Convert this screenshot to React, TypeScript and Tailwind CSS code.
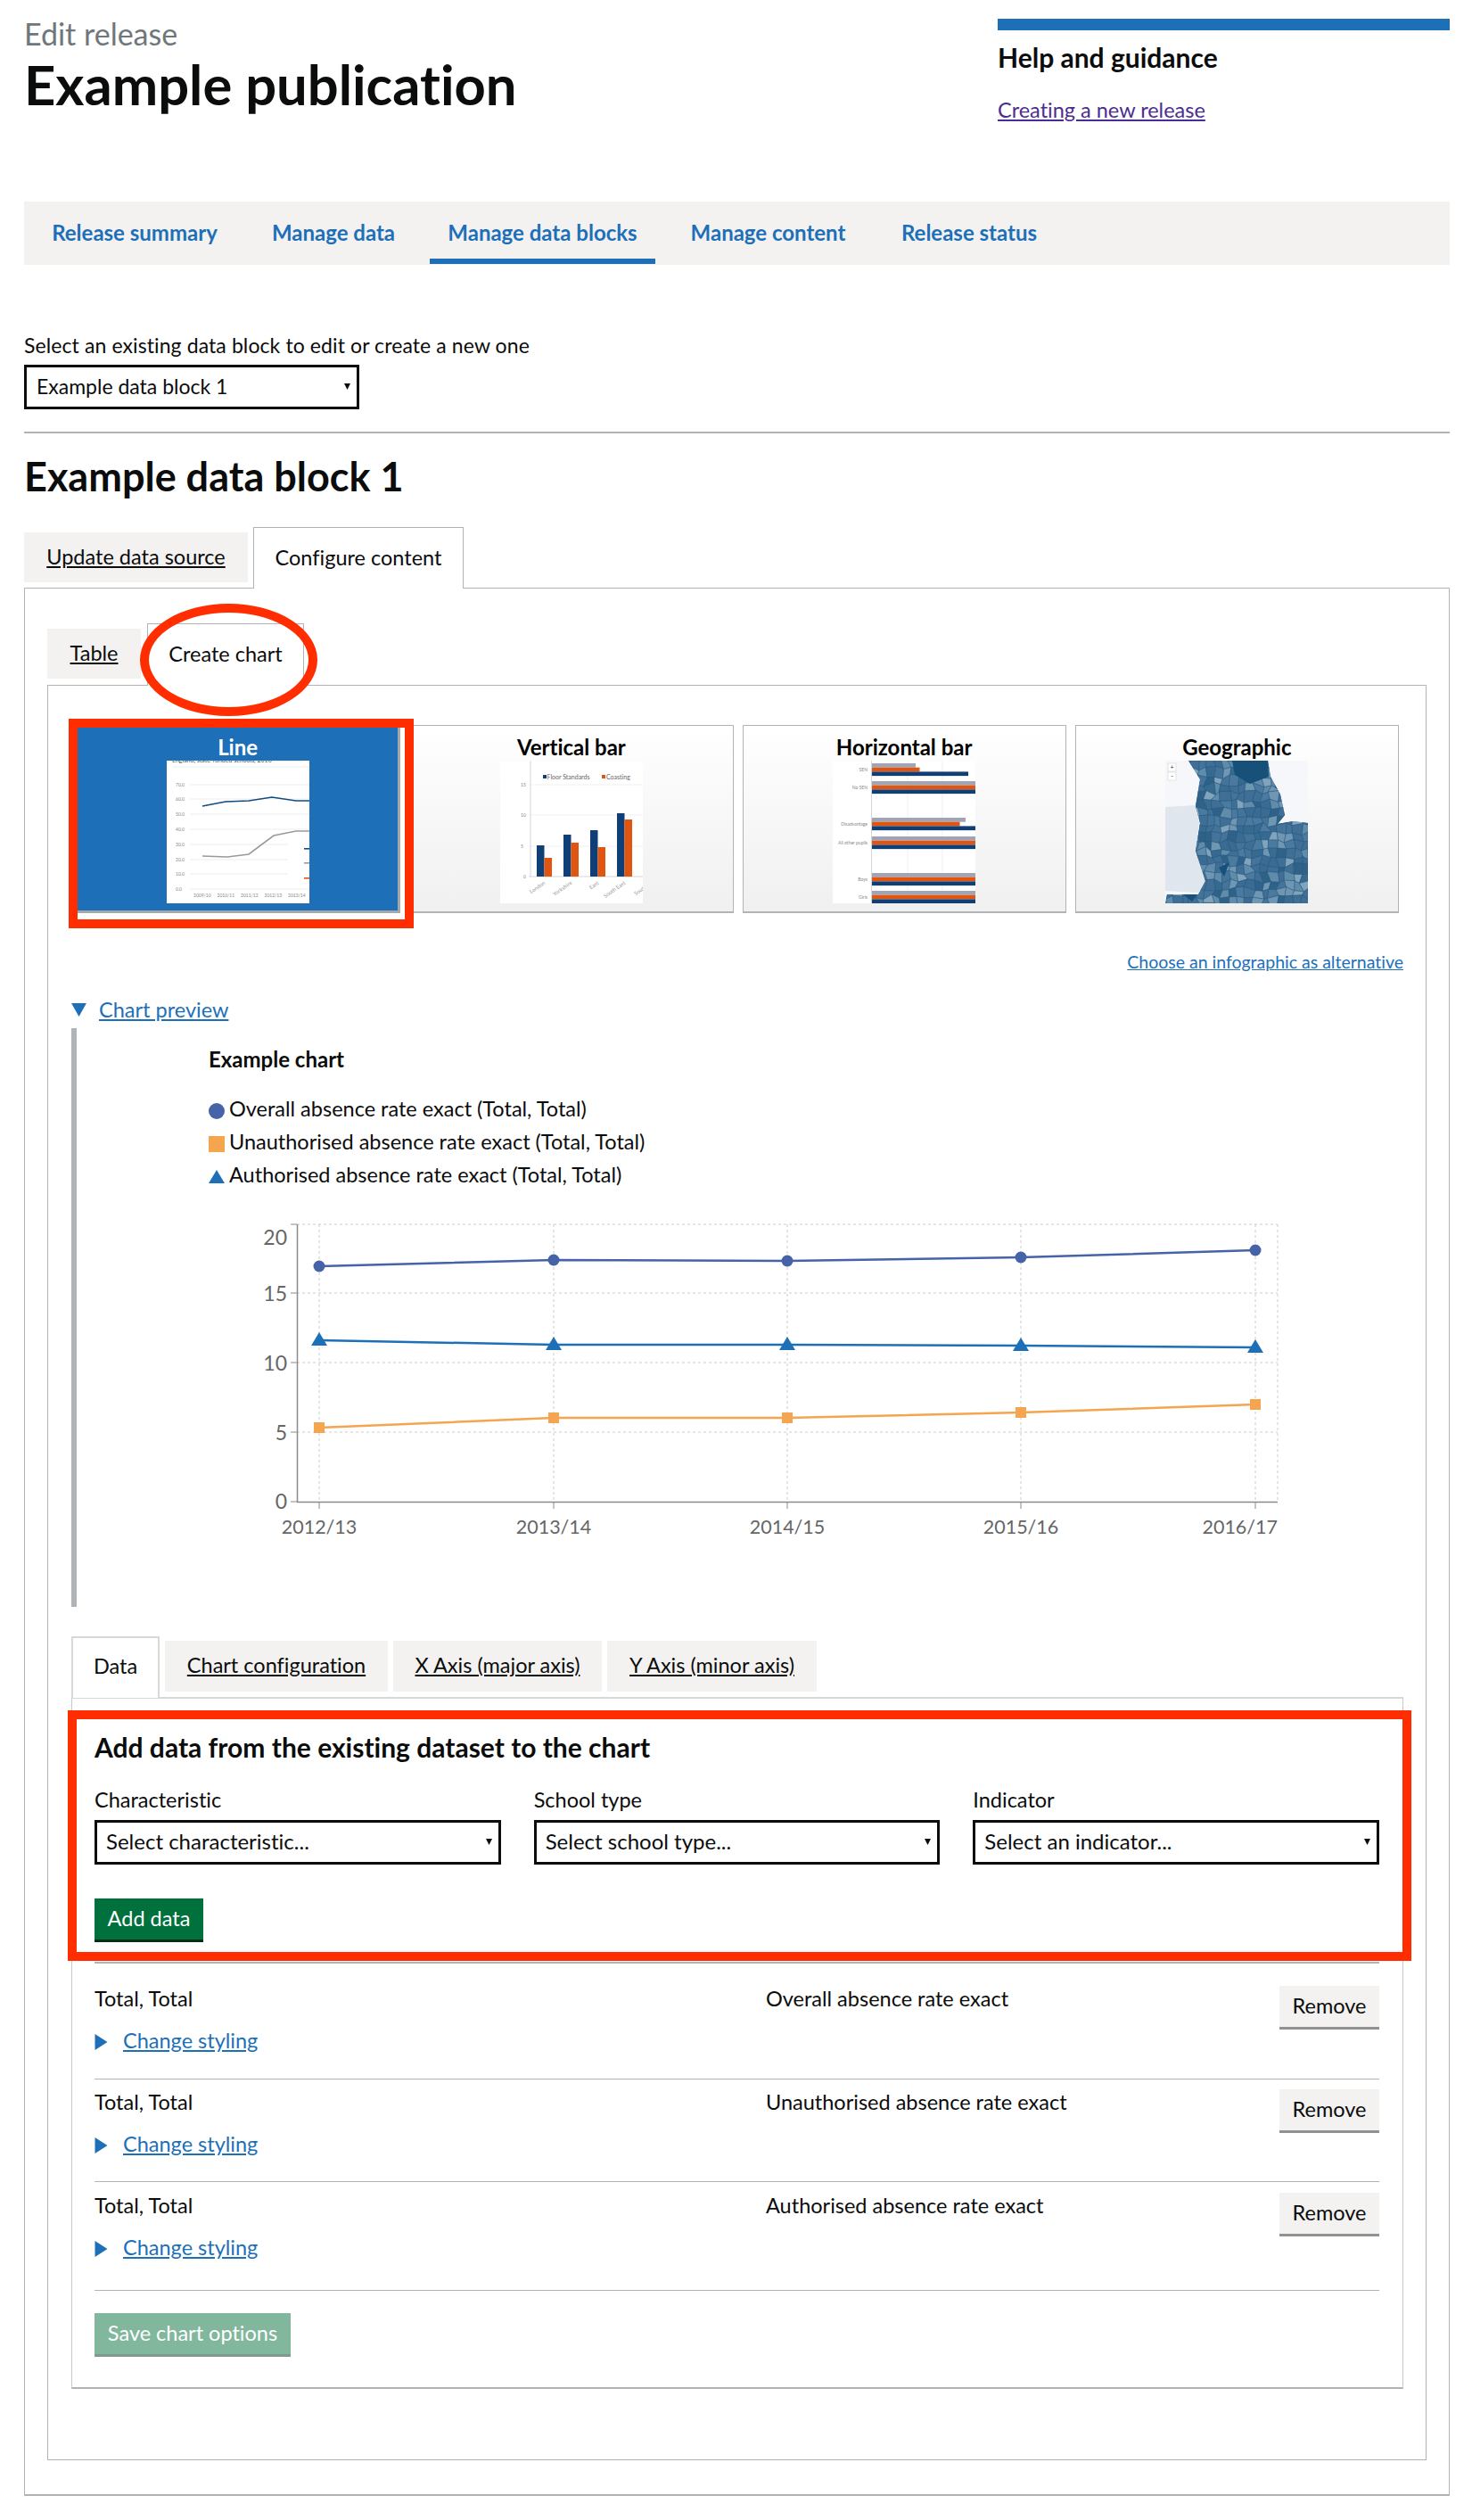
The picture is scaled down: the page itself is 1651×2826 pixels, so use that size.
import React from "react";

const BLUE = "#1d70b8";
const xs = [358, 621, 883, 1145, 1408];
const overall = [1419, 1412, 1413, 1409, 1401];
const auth = [1502, 1507, 1507, 1508, 1510];
const unauth = [1600, 1589, 1589, 1583, 1574];
const pts = (ys: number[]) => ys.map((y, i) => `${xs[i]},${y}`).join(" ");

function LineThumb() {
  const grid = [27, 43, 60, 77, 94, 111, 127, 144];
  const labs = ["70.0", "60.0", "50.0", "40.0", "30.0", "20.0", "10.0", "0.0"];
  const yrs = ["2009/10", "2010/11", "2011/12", "2012/13", "2013/14"];
  return (
    <svg viewBox="0 0 160 160" className="w-[160px] h-[160px] bg-white block">
      <text x="6" y="2" fontSize="7" fill="#555">England, state-funded schools, 2016</text>
      <line x1="6" y1="7" x2="160" y2="7" stroke="#eee" />
      {grid.map((y, i) => (
        <g key={y}>
          <line x1="26" y1={y} x2={i > 3 && i < 7 ? 136 : 160} y2={y} stroke="#e8e8e8" strokeWidth="0.8" />
          <text x="10" y={y + 2} fontSize="5" fill="#888">{labs[i]}</text>
        </g>
      ))}
      {yrs.map((t, i) => (
        <text key={t} x={30 + i * 26.5} y="153" fontSize="5" fill="#888">{t}</text>
      ))}
      <polyline points="40,51 66,46 92,45 118,41 145,45 160,45" fill="none" stroke="#0f4c81" strokeWidth="1.6" />
      <polyline points="40,107 68,108 92,105 120,84 145,79 160,79" fill="none" stroke="#9a9a9a" strokeWidth="1.6" />
      <rect x="154" y="98" width="6" height="1.6" fill="#0f4c81" />
      <rect x="154" y="114" width="6" height="1.6" fill="#9a9a9a" />
      <rect x="154" y="131" width="6" height="1.6" fill="#e0550f" />
    </svg>
  );
}

function VerticalThumb() {
  const bars = [
    [41, 95, 109],
    [71, 83, 92],
    [101, 78, 97],
    [131, 59, 66],
  ];
  const labs = ["London", "Yorkshire", "East", "South East", "South W"];
  return (
    <svg viewBox="0 0 160 160" className="w-[160px] h-[160px] bg-white block">
      {[27, 61, 96].map((y, i) => (
        <g key={y}>
          <line x1="32" y1={y} x2="160" y2={y} stroke="#eee" strokeWidth="0.8" />
          <text x="23" y={y + 2} fontSize="5" fill="#888">{["15", "10", "5"][i]}</text>
        </g>
      ))}
      <text x="26" y="132" fontSize="5" fill="#888">0</text>
      <line x1="34" y1="0" x2="34" y2="130" stroke="#ccc" strokeWidth="0.8" />
      <line x1="32" y1="130" x2="160" y2="130" stroke="#ccc" strokeWidth="0.8" />
      <rect x="48" y="16" width="4" height="4" fill="#0f3f74" />
      <text x="52.5" y="20.5" fontSize="7" fill="#666">Floor Standards</text>
      <rect x="114" y="16" width="4" height="4" fill="#e0550f" />
      <text x="119" y="20.5" fontSize="7" fill="#666">Coasting</text>
      {bars.map(([x, a, b]) => (
        <g key={x}>
          <rect x={x} y={a} width="8.5" height={130 - a} fill="#0f3f74" />
          <rect x={x + 8.5} y={b} width="8.5" height={130 - b} fill="#e0550f" />
        </g>
      ))}
      {labs.map((t, i) => (
        <text key={t} x={51 + i * 30} y="138" fontSize="6" fill="#999" textAnchor="end" transform={`rotate(-35 ${51 + i * 30} 138)`}>{t}</text>
      ))}
    </svg>
  );
}

function HorizontalThumb() {
  const groups: [number, number, number, number, string][] = [
    [3, 93, 97.5, 152, "SEN"],
    [23, 160, 160, 160, "No SEN"],
    [64, 149, 142.5, 160, "Disadvantage"],
    [85, 160, 160, 160, "All other pupils"],
    [126, 160, 160, 160, "Boys"],
    [146, 160, 160, 160, "Girls"],
  ];
  return (
    <svg viewBox="0 0 160 160" className="w-[160px] h-[160px] bg-white block">
      <line x1="84" y1="0" x2="84" y2="160" stroke="#eee" strokeWidth="0.8" />
      <line x1="123" y1="0" x2="123" y2="160" stroke="#eee" strokeWidth="0.8" />
      <line x1="43.5" y1="0" x2="43.5" y2="160" stroke="#ccc" strokeWidth="0.8" />
      {groups.map(([y, a, b, c, t]) => (
        <g key={t}>
          <rect x="44" y={y} width={a - 44} height="4.7" fill="#a0a4b5" />
          <rect x="44" y={y + 4.7} width={b - 44} height="4.7" fill="#e0550f" />
          <rect x="44" y={y + 9.4} width={c - 44} height="4.7" fill="#0f3f74" />
          <text x="39" y={y + 9} fontSize="5" fill="#888" textAnchor="end">{t}</text>
        </g>
      ))}
    </svg>
  );
}

function GeoThumb() {
  const palette = ["#3f6f96", "#4a7a9f", "#356a91", "#5f8cab", "#6f97b3", "#2f6288", "#3f6f96", "#44749a", "#80a4bc", "#3a6b92"];
  const rnd = (a: number, b: number) => {
    const s = Math.sin(a * 127.1 + b * 311.7) * 43758.5453;
    return s - Math.floor(s);
  };
  const cell = 9;
  const count = 18;
  const nodes: number[][][] = [];
  for (let j = 0; j <= count; j++) {
    const row: number[][] = [];
    for (let i = 0; i <= count; i++) {
      row.push([i * cell + (rnd(i, j) - 0.5) * 6, j * cell + (rnd(j + 9, i + 3) - 0.5) * 6]);
    }
    nodes.push(row);
  }
  const polys: { p: string; c: string }[] = [];
  for (let j = 0; j < count; j++) {
    for (let i = 0; i < count; i++) {
      const n = [nodes[j][i], nodes[j][i + 1], nodes[j + 1][i + 1], nodes[j + 1][i]];
      const c = palette[Math.floor(rnd(i * 3 + 1, j * 5 + 2) * palette.length)];
      polys.push({ p: n.map((q) => q.join(",")).join(" "), c });
    }
  }
  const land = "26,0 115,0 118,18 129,38 134,61 126,71 143,68 160,70 160,160 0,160 2,150 37,150 45,135 34,101 39,70 34,51 39,21";
  return (
    <svg viewBox="0 0 160 160" className="w-[160px] h-[160px] bg-[#f6f7fb] block">
      <defs>
        <clipPath id="land"><polygon points={land} /></clipPath>
      </defs>
      <polygon points="0,52 34,50 38,70 34,101 45,135 37,148 0,146" fill="#e0e6ee" />
      <g clipPath="url(#land)">
        <rect width="160" height="160" fill="#3f6f96" />
        {polys.map((q, i) => (
          <polygon key={i} points={q.p} fill={q.c} stroke="#2c5a7e" strokeWidth="0.5" />
        ))}
        <polygon points="75,0 115,0 116,18 95,26 78,16" fill="#175079" />
        <polygon points="60,120 72,114 66,130" fill="#175079" />
        <polygon points="20,150 36,150 30,158" fill="#175079" />
      </g>
      <rect x="3" y="3" width="9" height="9" fill="#fff" stroke="#ccc" strokeWidth="0.5" />
      <text x="7.5" y="10" fontSize="7" fill="#333" textAnchor="middle">+</text>
      <rect x="3" y="13" width="9" height="9" fill="#fff" stroke="#ccc" strokeWidth="0.5" />
      <text x="7.5" y="20" fontSize="7" fill="#333" textAnchor="middle">-</text>
    </svg>
  );
}

function Card({ title, active, children }: { title: string; active?: boolean; children: React.ReactNode }) {
  return (
    <div
      className={
        active
          ? "h-[211px] bg-[#1d70b8] border border-[#1d70b8] border-r-[3px] border-r-[#a5a8aa] border-b-[3px] border-b-[#a5a8aa] flex flex-col items-center pt-[8px]"
          : "h-[211px] bg-gradient-to-b from-white to-[#f0f0f0] border border-[#b1b4b6] border-b-[2px] flex flex-col items-center pt-[8px]"
      }
    >
      <div className={active ? "h-[31px] leading-[31px] font-bold text-[24px] text-white" : "h-[31px] leading-[31px] font-bold text-[24px] text-black"}>{title}</div>
      {children}
    </div>
  );
}

function Chart() {
  const gridY = [1372, 1449, 1527, 1605];
  return (
    <svg viewBox="290 1360 1160 375" className="block w-[1160px] h-[375px] ml-[204px] mt-[25px]">
      {gridY.map((y) => (
        <line key={y} x1="333" y1={y} x2="1433" y2={y} stroke="#ccc" strokeDasharray="3 3" />
      ))}
      {[...xs, 1433].map((x) => (
        <line key={x} x1={x} y1="1372" x2={x} y2="1683" stroke="#ccc" strokeDasharray="3 3" />
      ))}
      <line x1="333.5" y1="1372" x2="333.5" y2="1684" stroke="#8a8a8a" strokeWidth="1.5" />
      <line x1="333" y1="1683.5" x2="1433" y2="1683.5" stroke="#8a8a8a" strokeWidth="1.5" />
      {[1372, 1449, 1527, 1605, 1683].map((y) => (
        <line key={y} x1="326" y1={y} x2="333" y2={y} stroke="#8a8a8a" />
      ))}
      {xs.map((x) => (
        <line key={x} x1={x} y1="1684" x2={x} y2="1691" stroke="#8a8a8a" />
      ))}
      {[
        ["20", 1387],
        ["15", 1450],
        ["10", 1528],
        ["5", 1606],
        ["0", 1683],
      ].map(([t, y]) => (
        <text key={t} x="322" y={Number(y) + 8} fontSize="23" fill="#666" textAnchor="end">{t}</text>
      ))}
      {["2012/13", "2013/14", "2014/15", "2015/16"].map((t, i) => (
        <text key={t} x={xs[i]} y="1719" fontSize="21.5" fill="#666" textAnchor="middle">{t}</text>
      ))}
      <text x="1433" y="1719" fontSize="21.5" fill="#666" textAnchor="end">2016/17</text>
      <polyline points={pts(overall)} fill="none" stroke="#4763a7" strokeWidth="2.5" />
      <polyline points={pts(auth)} fill="none" stroke={BLUE} strokeWidth="2.5" />
      <polyline points={pts(unauth)} fill="none" stroke="#f5a450" strokeWidth="2.5" />
      {overall.map((y, i) => (
        <circle key={i} cx={xs[i]} cy={y} r="6.5" fill="#4763a7" />
      ))}
      {auth.map((y, i) => (
        <polygon key={i} points={`${xs[i]},${y - 9} ${xs[i] + 9},${y + 6} ${xs[i] - 9},${y + 6}`} fill={BLUE} />
      ))}
      {unauth.map((y, i) => (
        <rect key={i} x={xs[i] - 6} y={y - 6} width="12" height="12" fill="#f5a450" />
      ))}
    </svg>
  );
}

function Legend({ kind, text }: { kind: "c" | "s" | "t"; text: string }) {
  return (
    <div className="flex items-center h-[37px] leading-[37px]">
      <svg viewBox="0 0 18 18" className="w-[18px] h-[18px] mr-[5px] shrink-0 relative top-[2px]">
        {kind === "c" && <circle cx="9" cy="9" r="9" fill="#4763a7" />}
        {kind === "s" && <rect width="18" height="18" fill="#f5a450" />}
        {kind === "t" && <polygon points="9,1 18,16 0,16" fill={BLUE} />}
      </svg>
      <span>{text}</span>
    </div>
  );
}

function Row({ name, pt, pb }: { name: string; pt: string; pb: string }) {
  return (
    <div className={`flex items-start border-b border-[#b1b4b6] ${pt} ${pb}`}>
      <div className="w-[753px]">
        <div className="leading-[28px] h-[28px]">Total, Total</div>
        <div className="flex items-center mt-[19px] leading-[28px] h-[28px]">
          <svg viewBox="0 0 14 18" className="w-[15px] h-[18px] mr-[17px] relative top-[2px]"><polygon points="0,0 14,9 0,18" fill={BLUE} /></svg>
          <a href="#" className="underline text-[#1d70b8]">Change styling</a>
        </div>
      </div>
      <div className="flex-1 leading-[28px]">{name}</div>
      <button className="w-[112px] h-[49px] bg-[#f3f2f1] border-b-[3px] border-[#929191] text-[#0b0c0c]">Remove</button>
    </div>
  );
}

function Arrow() {
  return (
    <svg viewBox="0 0 7 7" className="absolute right-[10px] top-[21px] w-[7px] h-[7px] pointer-events-none">
      <polygon points="0,0 7,0 3.5,7" fill="#0b0c0c" />
    </svg>
  );
}

function SelectBox({ label, placeholder }: { label: string; placeholder: string }) {
  return (
    <div>
      <div className="leading-[30px] h-[30px]">{label}</div>
      <div className="relative mt-[8px]">
        <select defaultValue="" className="block w-full h-[50px] appearance-none border-[3px] border-[#0b0c0c] bg-white pl-[10px] pb-[2px] text-[24px]">
          <option value="">{placeholder}</option>
        </select>
        <Arrow />
      </div>
    </div>
  );
}

export default function App() {
  return (
    <div className="relative w-[1651px] h-[2826px] bg-white pl-[27px] pr-[25px] text-[#0b0c0c] text-[23.5px] [font-variant-ligatures:none] [font-family:Lato,'Noto_Sans',sans-serif]">
      {/* header */}
      <div className="flex justify-between items-start h-[226px]">
        <div className="pt-[20px]">
          <div className="text-[#6f777b] text-[34px] leading-[36px]">Edit release</div>
          <h1 className="mt-[6px] font-bold text-[61.5px] leading-[64px]">Example publication</h1>
        </div>
        <div className="w-[507px] mt-[21px] border-t-[13px] border-[#1d70b8] pt-[13px]">
          <div className="font-bold text-[30px] leading-[34px]">Help and guidance</div>
          <a href="#" className="block mt-[27px] leading-[30px] underline text-[#4c2c92]">Creating a new release</a>
        </div>
      </div>

      {/* nav */}
      <div className="h-[71px] bg-[#f3f2f1] flex pl-[9px] gap-[19px] font-bold text-[#1d70b8] text-[24px]">
        <div className="w-[230px] h-[70px] pt-[5px] flex items-center justify-center border-b-[6px] border-transparent">Release summary</div>
        <div className="w-[178px] h-[70px] pt-[5px] flex items-center justify-center border-b-[6px] border-transparent">Manage data</div>
        <div className="w-[253px] h-[70px] pt-[5px] flex items-center justify-center border-b-[6px] border-[#1d70b8]">Manage data blocks</div>
        <div className="w-[215px] h-[70px] pt-[5px] flex items-center justify-center border-b-[6px] border-transparent">Manage content</div>
        <div className="w-[198px] h-[70px] pt-[5px] flex items-center justify-center border-b-[6px] border-transparent">Release status</div>
      </div>

      <div className="mt-[75px] leading-[30px] text-[23px] tracking-[0.1px]">Select an existing data block to edit or create a new one</div>
      <div className="relative w-[376px] mt-[7px]">
        <select defaultValue="a" className="block w-full h-[50px] appearance-none border-[3px] border-[#0b0c0c] bg-white pl-[11px] pb-[1px] text-[23px]">
          <option value="a">Example data block 1</option>
        </select>
        <Arrow />
      </div>
      <hr className="mt-[25px] border-0 h-[2px] bg-[#b1b4b6]" />
      <h2 className="mt-[23px] font-bold text-[45px] leading-[50px]">Example data block 1</h2>

      {/* outer tabs */}
      <div className="mt-[32px] flex items-start gap-[6px] h-[68px]">
        <a href="#" className="mt-[6px] w-[251px] h-[56px] bg-[#f3f2f1] flex items-center justify-center underline text-[#0b0c0c]">Update data source</a>
        <div className="relative z-10 w-[236px] h-[69px] bg-white border border-b-0 border-[#b1b4b6] flex items-center justify-center">Configure content</div>
      </div>

      <div className="border border-b-[2px] border-[#b1b4b6] px-[25px] pt-[39px] pb-[38px]">
        {/* inner tabs */}
        <div className="flex items-start gap-[7px] h-[69px]">
          <a href="#" className="mt-[6px] w-[105px] h-[56px] bg-[#f3f2f1] flex items-center justify-center underline text-[#0b0c0c]">Table</a>
          <div className="relative z-10 w-[176px] h-[70px] pb-[2px] bg-white border border-b-0 border-[#b1b4b6] flex items-center justify-center">Create chart</div>
        </div>

        <div className="border border-[#b1b4b6] pl-[26px] pr-[25px] pt-[44px] pb-[79px]">
          <div className="grid grid-cols-4 gap-[10px] pl-[6px] pr-[5px]">
            <Card title="Line" active><LineThumb /></Card>
            <Card title="Vertical bar"><VerticalThumb /></Card>
            <Card title="Horizontal bar"><HorizontalThumb /></Card>
            <Card title="Geographic"><GeoThumb /></Card>
          </div>

          <div className="mt-[42px] text-right text-[19.5px] leading-[26px]">
            <a href="#" className="underline text-[#1d70b8]">Choose an infographic as alternative</a>
          </div>

          <div className="mt-[25px] flex items-center h-[30px] leading-[30px]">
            <svg viewBox="0 0 18 16" className="w-[17px] h-[15px] mr-[14px]"><polygon points="0,0 18,0 9,16" fill={BLUE} /></svg>
            <a href="#" className="underline text-[#1d70b8]">Chart preview</a>
          </div>

          <div className="mt-[6px] h-[649px] border-l-[6px] border-[#b1b4b6] pt-[22px]">
            <div className="ml-[148px] font-bold text-[24px] leading-[26px]">Example chart</div>
            <div className="ml-[148px] mt-[24px]">
              <Legend kind="c" text="Overall absence rate exact (Total, Total)" />
              <Legend kind="s" text="Unauthorised absence rate exact (Total, Total)" />
              <Legend kind="t" text="Authorised absence rate exact (Total, Total)" />
            </div>
            <Chart />
          </div>

          {/* chart tabs */}
          <div className="mt-[33px] flex items-start gap-[6px] h-[68px]">
            <div className="relative z-10 w-[99px] h-[69px] pb-[3px] bg-white border-2 border-b-0 border-[#d8d8d8] flex items-center justify-center">Data</div>
            <a href="#" className="mt-[5px] w-[250px] h-[57px] pb-[2px] bg-[#f3f2f1] flex items-center justify-center underline text-[#0b0c0c]">Chart configuration</a>
            <a href="#" className="mt-[5px] w-[234px] h-[57px] pb-[2px] bg-[#f3f2f1] flex items-center justify-center underline text-[#0b0c0c]">X Axis (major axis)</a>
            <a href="#" className="mt-[5px] w-[235px] h-[57px] pb-[2px] bg-[#f3f2f1] flex items-center justify-center underline text-[#0b0c0c]">Y Axis (minor axis)</a>
          </div>

          <div className="border border-t-[2px] border-[#c8c8c8] border-t-[#d8d8d8] border-b-[2px] border-b-[#b1b4b6] pl-[25px] pr-[26px] pt-[37px] pb-[34px]">
            <h3 className="font-bold text-[30px] leading-[34px]">Add data from the existing dataset to the chart</h3>
            <div className="mt-[27px] grid grid-cols-3 gap-[37px]">
              <SelectBox label="Characteristic" placeholder="Select characteristic..." />
              <SelectBox label="School type" placeholder="Select school type..." />
              <SelectBox label="Indicator" placeholder="Select an indicator..." />
            </div>
            <button className="block mt-[38px] w-[122px] h-[49px] bg-[#00703c] border-b-[3px] border-[#002d18] text-white">Add data</button>
            <hr className="mt-[22px] border-0 h-[2px] bg-[#b1b4b6]" />
            <Row name="Overall absence rate exact" pt="pt-[25px]" pb="pb-[29px]" />
            <Row name="Unauthorised absence rate exact" pt="pt-[11px]" pb="pb-[28px]" />
            <Row name="Authorised absence rate exact" pt="pt-[12px]" pb="pb-[34px]" />
            <button className="block mt-[25px] w-[220px] h-[49px] bg-[#80b79d] border-b-[3px] border-[#7f9a8c] text-white">Save chart options</button>
          </div>
        </div>
      </div>

      {/* annotations */}
      <div className="absolute left-[157px] top-[677px] w-[199px] h-[126px] rounded-[50%] border-[10px] border-[#ff2d00] pointer-events-none z-20" />
      <div className="absolute left-[77px] top-[806px] w-[387px] h-[235px] border-[10px] border-[#ff2d00] pointer-events-none z-20" />
      <div className="absolute left-[76px] top-[1918px] w-[1507px] h-[281px] border-[10px] border-[#ff2d00] pointer-events-none z-20" />
    </div>
  );
}
